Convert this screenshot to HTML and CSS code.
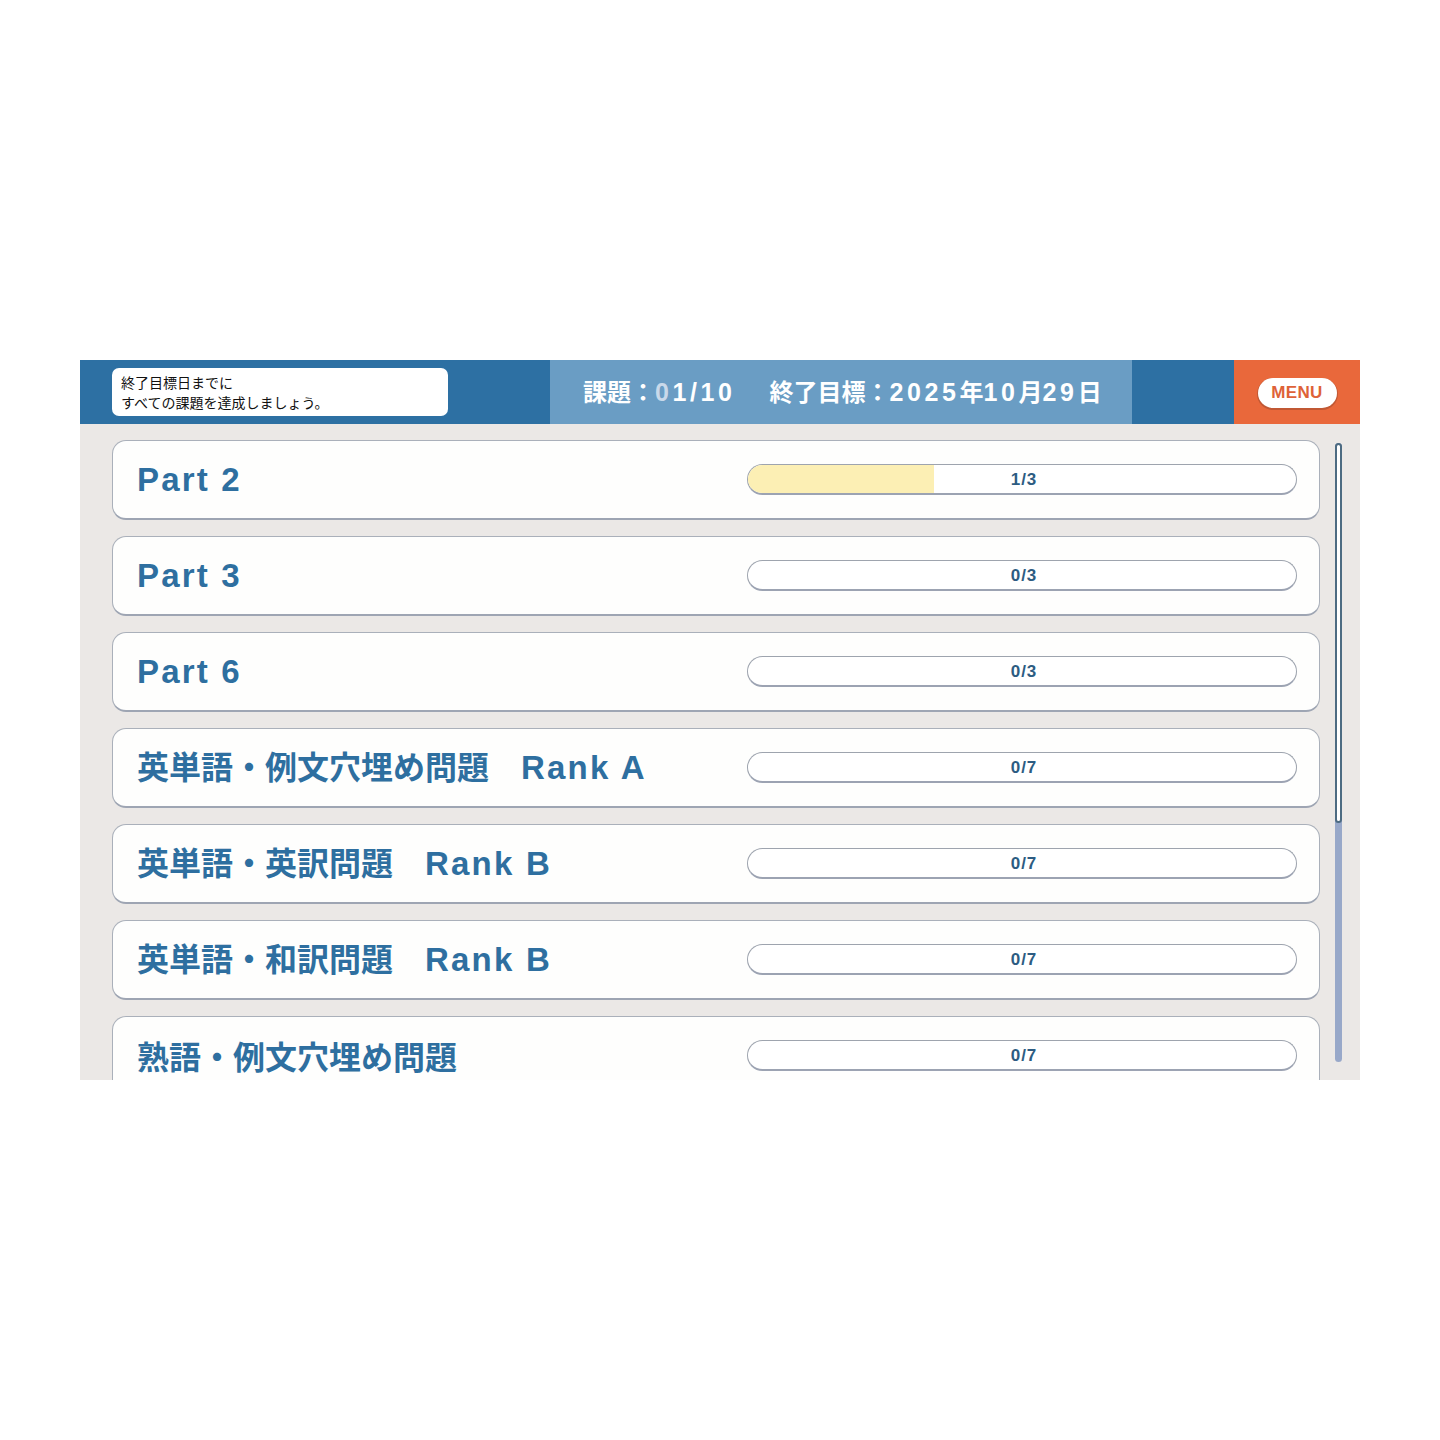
FILE: index.html
```html
<!DOCTYPE html>
<html lang="ja">
<head>
<meta charset="utf-8">
<title>課題一覧</title>
<link rel="stylesheet" href="styles.css">
</head>
<body>
<div class="app">
  <header class="topbar">
    <div class="tb-left">
      <div class="notice">終了目標日までに<br>すべての課題を達成しましょう。</div>
    </div>
    <div class="tb-mid">
      <div class="mid-text">課題：<span class="num"><span class="dim">0</span>1/10</span><span class="gap"></span>終了目標：<span class="num">2025</span>年<span class="num">10</span>月<span class="num">29</span>日</div>
    </div>
    <div class="tb-blank"></div>
    <div class="tb-menu"><button class="menu-btn">MENU</button></div>
  </header>
  <main class="content">
    <div class="list">
      <div class="card"><div class="title"><span class="lat">Part 2</span></div><div class="bar"><div class="fill" style="width:34%"></div><span class="count">1/3</span></div></div>
      <div class="card"><div class="title"><span class="lat">Part 3</span></div><div class="bar"><span class="count">0/3</span></div></div>
      <div class="card"><div class="title"><span class="lat">Part 6</span></div><div class="bar"><span class="count">0/3</span></div></div>
      <div class="card"><div class="title">英単語・例文穴埋め問題　<span class="lat">Rank A</span></div><div class="bar"><span class="count">0/7</span></div></div>
      <div class="card"><div class="title">英単語・英訳問題　<span class="lat">Rank B</span></div><div class="bar"><span class="count">0/7</span></div></div>
      <div class="card"><div class="title">英単語・和訳問題　<span class="lat">Rank B</span></div><div class="bar"><span class="count">0/7</span></div></div>
      <div class="card"><div class="title">熟語・例文穴埋め問題</div><div class="bar"><span class="count">0/7</span></div></div>
    </div>
    <div class="scroll"><div class="thumb"></div></div>
  </main>
</div>
</body>
</html>
```

FILE: styles.css
```css
html, body {
  margin: 0;
  padding: 0;
  background: #ffffff;
}
body {
  font-family: "Noto Sans CJK JP", "Noto Sans", sans-serif;
}
.app {
  margin: 360px 80px 0;
  width: 1280px;
  height: 720px;
  display: flex;
  flex-direction: column;
  overflow: hidden;
}
.topbar {
  height: 64px;
  display: flex;
  flex: none;
}
.tb-left {
  width: 470px;
  background: #2d70a3;
  padding: 8px 0 0 32px;
  box-sizing: border-box;
}
.notice {
  width: 336px;
  height: 48px;
  box-sizing: border-box;
  background: #ffffff;
  border-radius: 7px;
  padding: 4px 9px;
  font-size: 14px;
  line-height: 20px;
  color: #111111;
}
.tb-mid {
  width: 582px;
  background: #6a9dc4;
  display: flex;
  align-items: center;
  padding-left: 33px;
  box-sizing: border-box;
  color: #ffffff;
  font-size: 24px;
  font-weight: 700;
  white-space: nowrap;
}
.mid-text {
  line-height: 32px;
  margin-top: -1px;
}
.mid-text .num {
  font-family: "Liberation Sans", "Noto Sans", sans-serif;
  letter-spacing: 3.6px;
  font-size: 25px;
  font-weight: 700;
}
.mid-text .dim {
  color: #c9d9ea;
}
.mid-text .gap {
  display: inline-block;
  width: 34px;
}
.tb-blank {
  width: 102px;
  background: #2d70a3;
}
.tb-menu {
  width: 126px;
  background: #e9683b;
  display: flex;
  align-items: center;
  justify-content: center;
}
.menu-btn {
  width: 79px;
  height: 30px;
  border: none;
  border-radius: 15px;
  background: #ffffff;
  box-shadow: 0 1px 0 1px rgba(120, 60, 40, 0.35);
  color: #de6238;
  font-family: "Liberation Sans", sans-serif;
  font-size: 17px;
  font-weight: 700;
  letter-spacing: 0.3px;
  padding: 0;
  margin-top: 1px;
}
.content {
  flex: 1;
  background: #ebe8e6;
  display: flex;
  padding: 16px 0 0 32px;
  overflow: hidden;
}
.list {
  width: 1208px;
  display: flex;
  flex-direction: column;
  gap: 16px;
  flex: none;
}
.card {
  height: 80px;
  flex: none;
  box-sizing: border-box;
  background: #fefefd;
  border: 1px solid #aab0ba;
  border-bottom: 2px solid #9ea5b3;
  border-radius: 14px;
  display: flex;
  align-items: center;
  padding: 0 22px 0 24px;
}
.title {
  flex: 1;
  color: #2e6fa0;
  font-size: 32px;
  font-weight: 700;
  white-space: nowrap;
  line-height: 1;
  margin-top: -2px;
}
.title .lat {
  font-family: "Liberation Sans", "Noto Sans", sans-serif;
  letter-spacing: 2.2px;
  font-size: 33px;
}
.bar {
  position: relative;
  width: 550px;
  height: 31px;
  box-sizing: border-box;
  border: 1px solid #9ea4ae;
  border-bottom: 2px solid #9ca3b2;
  border-radius: 16px;
  background: #ffffff;
  overflow: hidden;
  display: flex;
  align-items: center;
  justify-content: center;
  margin-top: -1px;
}
.fill {
  position: absolute;
  left: 0;
  top: 0;
  bottom: 0;
  background: #fcefb4;
}
.count {
  position: relative;
  color: #2d5c82;
  font-family: "Liberation Sans", "Noto Sans", sans-serif;
  font-size: 17px;
  font-weight: 700;
  letter-spacing: 1px;
  margin: 3px 0 0 4px;
}
.scroll {
  width: 7px;
  height: 619px;
  margin: 3px 0 0 15px;
  background: #98a8c9;
  border-radius: 4px;
  flex: none;
}
.thumb {
  height: 380px;
  box-sizing: border-box;
  border: 2px solid #4d6b82;
  border-radius: 4px;
  background: #ffffff;
}
```
